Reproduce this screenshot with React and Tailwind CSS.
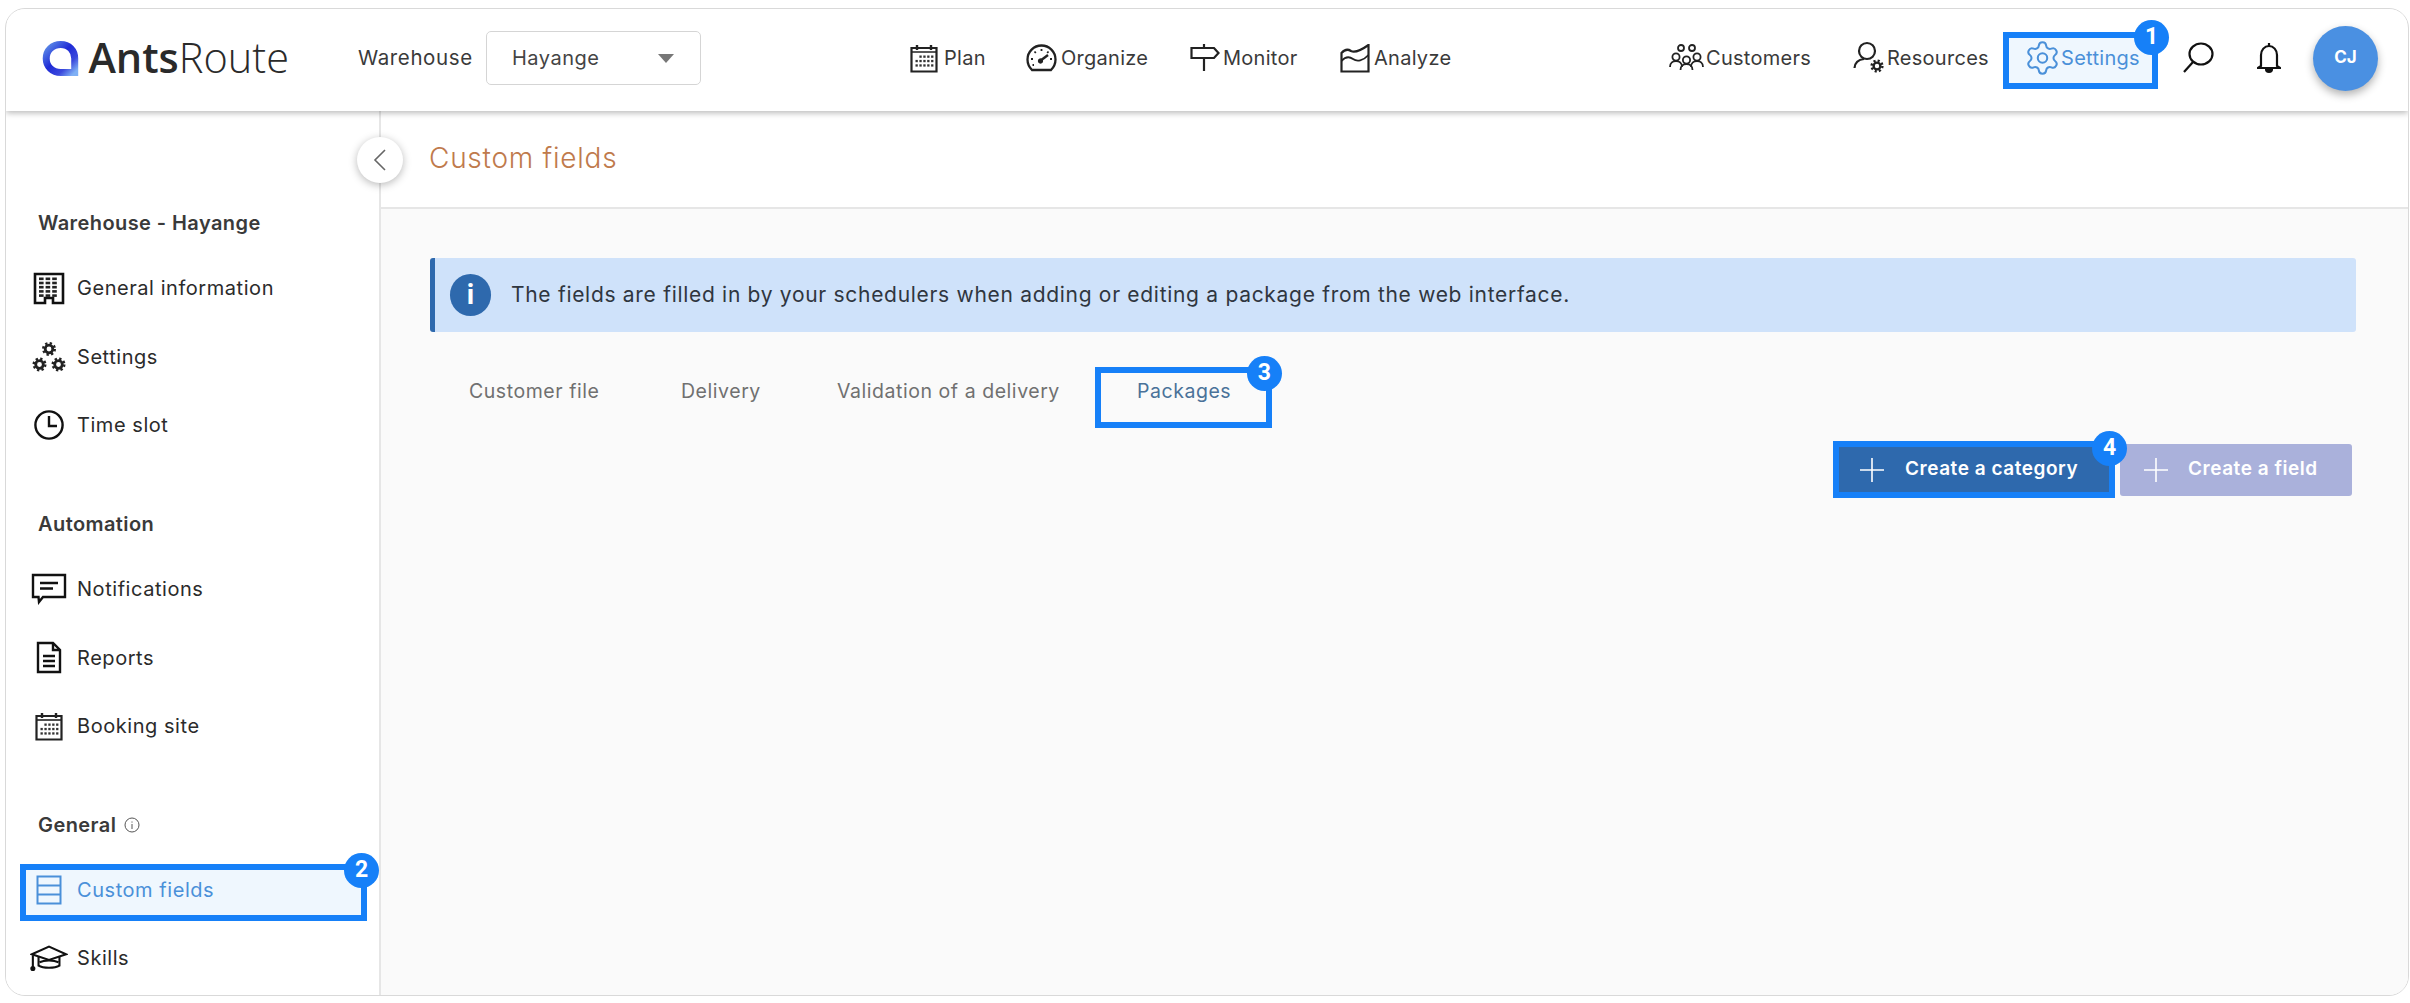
import React from "react";

const Ink = "#222";

function Gear({ cx, cy, r, color = Ink, sw = 2.4 }) {
  const t = 2 * Math.PI * (r + 2) / 16;
  return (
    <g fill="none" stroke={color}>
      <circle cx={cx} cy={cy} r={r} strokeWidth={sw} />
      <circle cx={cx} cy={cy} r={r + 2} strokeWidth={2.4} strokeDasharray={`${t} ${t}`} />
    </g>
  );
}

function Logo() {
  return (
    <svg width="40" height="39" viewBox="0 0 40 39" fill="none">
      <defs>
        <linearGradient id="lg" x1="0" y1="0" x2="1" y2="1">
          <stop offset="0" stopColor="#5f8fe8" />
          <stop offset="0.45" stopColor="#1f2bd6" />
          <stop offset="0.75" stopColor="#3a48dc" />
          <stop offset="1" stopColor="#7fb0f5" />
        </linearGradient>
      </defs>
      <path d="M20 4.5C11 4.5 4.5 11 4.5 19.5S11 34.5 20 34.5H35V19.5C35 11 29 4.5 20 4.5Z" stroke="url(#lg)" strokeWidth="7.5" />
    </svg>
  );
}

function IconBuilding() {
  const cells = [];
  for (let r = 0; r < 5; r++) for (let c = 0; c < 3; c++) cells.push(<rect key={`${r}${c}`} x={6 + c * 6.6} y={5.5 + r * 4.2} width="4.6" height="2.6" fill={Ink} />);
  return (
    <svg width="32" height="33" viewBox="0 0 32 33" fill="none">
      <path d="M2 2H30V31H20V26H12V31H2Z" stroke="#111" strokeWidth="2.6" />
      {cells}
    </svg>
  );
}
function IconGears() {
  return (
    <svg width="34" height="34" viewBox="0 0 34 34">
      <Gear cx={17} cy={9} r={3.8} sw={2.8} />
      <Gear cx={7.5} cy={24.5} r={3.8} sw={2.8} />
      <Gear cx={26.5} cy={24.5} r={3.8} sw={2.8} />
    </svg>
  );
}
function IconClock() {
  return (
    <svg width="32" height="32" viewBox="0 0 32 32" fill="none" stroke="#111" strokeWidth="2.4">
      <circle cx="16" cy="16" r="13.6" />
      <path d="M16 7V17H24" />
    </svg>
  );
}
function IconChat() {
  return (
    <svg width="36" height="32" viewBox="0 0 36 32" fill="none" stroke="#111" strokeWidth="2.4">
      <path d="M2 2H34V24H12L8 29L7.5 24H2Z" />
      <path d="M9 10H27M9 15.5H22" />
    </svg>
  );
}
function IconDoc() {
  return (
    <svg width="26" height="33" viewBox="0 0 26 33" fill="none" stroke="#111" strokeWidth="2.4">
      <path d="M2 2H17L24 9V31H2Z" />
      <path d="M17 2V9H24M7 15H19M7 20H19M7 25H19" />
    </svg>
  );
}
function Calendar({ w = 28, h = 29 }) {
  const dots = [];
  for (let r = 0; r < 3; r++) for (let c = 0; c < 5; c++) if (!(r === 0 && c === 0)) dots.push(<rect key={`${r}${c}`} x={5.5 + c * 3.9} y={11.5 + r * 4.4} width="2.3" height="2.3" fill="#333" />);
  return (
    <svg width={w} height={h} viewBox="0 0 28 29" fill="none">
      <path d="M1.5 4H26.5V27.5H1.5Z" stroke="#222" strokeWidth="2.2" />
      <path d="M1.5 8H26.5" stroke="#222" strokeWidth="1.6" />
      <path d="M7 1V6M21 1V6" stroke="#222" strokeWidth="2.4" />
      {dots}
    </svg>
  );
}
function IconTable() {
  return (
    <svg width="26" height="30" viewBox="0 0 26 30" fill="none" stroke="#4a90d9" strokeWidth="2">
      <rect x="1.5" y="1.5" width="23" height="27" />
      <path d="M1.5 10.5H24.5M1.5 19.5H24.5" />
    </svg>
  );
}
function IconCap() {
  return (
    <svg width="40" height="28" viewBox="0 0 40 28" fill="none" stroke="#111" strokeWidth="2.2">
      <path d="M2 10L20 2L38 10L20 16Z" />
      <path d="M9 13V22C14 25 26 25 31 22V13" />
      <path d="M10 18.5C15 16 25 16 30 18.5" />
      <path d="M3 11V25" />
      <circle cx="3" cy="25" r="1.6" fill="#111" />
    </svg>
  );
}
function IconGauge() {
  return (
    <svg width="31" height="28" viewBox="0 0 31 28" fill="none" stroke="#222">
      <path d="M6 26H25C28 23 29.5 19.5 29.5 15.5A14 14 0 0 0 1.5 15.5C1.5 19.5 3 23 6 26Z" strokeWidth="2.3" />
      <path d="M15.5 5V7M8.5 7.5L9.8 9M5 15H7M26 15H24M22.5 7.5L21.2 9M6.5 21H8" strokeWidth="1.8" />
      <path d="M14 17L22 11" strokeWidth="2.4" />
      <circle cx="14.5" cy="17" r="2.2" fill="#222" />
    </svg>
  );
}
function IconSign() {
  return (
    <svg width="30" height="28" viewBox="0 0 30 28" fill="none" stroke="#222" strokeWidth="2.2">
      <path d="M14 0V3M14 15V27" />
      <path d="M1.5 4H24L28.5 9L24 14H1.5Z" />
    </svg>
  );
}
function IconChart() {
  return (
    <svg width="30" height="29" viewBox="0 0 30 29" fill="none" stroke="#222" strokeWidth="2.2">
      <path d="M1.5 9C5 5 8 5 11 7C15 9 20 7 28.5 1V27.5H1.5Z" />
      <path d="M1.5 17C5 13 9 12 13 15C17 18 23 17 28.5 11" strokeWidth="1.8" />
    </svg>
  );
}
function Person({ x, y }) {
  const d = `M${x - 6} ${y + 10}C${x - 6} ${y + 6} ${x - 3} ${y + 4} ${x} ${y + 4}C${x + 3} ${y + 4} ${x + 6} ${y + 6} ${x + 6} ${y + 10}`;
  return (
    <g>
      <circle cx={x} cy={y} r="3.6" />
      <path d={d} />
    </g>
  );
}
function IconPeople() {
  return (
    <svg width="35" height="28" viewBox="0 0 35 28" fill="none" stroke="#222" strokeWidth="1.8">
      <circle cx="12" cy="4" r="3" />
      <circle cx="23" cy="4" r="3" />
      <Person x={7} y={13} />
      <Person x={28} y={13} />
      <Person x={17.5} y={16} />
    </svg>
  );
}
function IconPersonGear() {
  return (
    <svg width="34" height="34" viewBox="0 0 34 34" fill="none" stroke="#222">
      <circle cx="14" cy="10" r="8" strokeWidth="2.2" />
      <path d="M1.5 27C2 21 6 18.5 11 18" strokeWidth="2.2" />
      <Gear cx={24} cy={25} r={3.4} sw={2.4} />
    </svg>
  );
}
function IconSettings() {
  return (
    <svg width="31" height="34" viewBox="2.5 1.2 19 21.6" fill="none" stroke="#4a90d9" strokeWidth="1.3" strokeLinejoin="round">
      <path d="M9.671 4.136a2.34 2.34 0 0 1 4.659 0 2.34 2.34 0 0 0 3.319 1.915 2.34 2.34 0 0 1 2.33 4.033 2.34 2.34 0 0 0 0 3.831 2.34 2.34 0 0 1-2.33 4.033 2.34 2.34 0 0 0-3.319 1.915 2.34 2.34 0 0 1-4.659 0 2.34 2.34 0 0 0-3.32-1.915 2.34 2.34 0 0 1-2.33-4.033 2.34 2.34 0 0 0 0-3.831A2.34 2.34 0 0 1 6.35 6.051a2.34 2.34 0 0 0 3.319-1.915" />
      <circle cx="12" cy="12" r="3" />
    </svg>
  );
}
function IconSearch() {
  return (
    <svg width="32" height="32" viewBox="0 0 32 32" fill="none" stroke="#111" strokeWidth="2.2">
      <ellipse cx="19" cy="12" rx="11.5" ry="10.5" />
      <path d="M11 20L2 30" />
    </svg>
  );
}
function IconBell() {
  return (
    <svg width="24" height="32" viewBox="0 0 24 32" fill="none" stroke="#111" strokeWidth="2.2">
      <path d="M12 1V4" />
      <path d="M4 24V13C4 8 7.5 4 12 4C16.5 4 20 8 20 13V24L23 26H1Z" />
      <path d="M9 27C9 31 15 31 15 27" fill="#111" />
    </svg>
  );
}
function Plus() {
  return (
    <svg width="26" height="26" viewBox="0 0 26 26" stroke="#fff" strokeWidth="1.6">
      <path d="M13 1V25M1 13H25" />
    </svg>
  );
}
function Badge({ n, className }) {
  return (
    <span className={`absolute z-20 flex h-[35px] w-[35px] items-center justify-center rounded-full bg-[#1680f8] text-[23px] font-bold text-white [font-family:Roboto,sans-serif] ${className}`}>
      {n}
    </span>
  );
}

function NavItem({ icon, label, width, gap = "ml-[6px]", className = "" }) {
  return (
    <div className={`flex shrink-0 items-center ${className}`} style={{ width }}>
      {icon}
      <span className={`${gap} whitespace-nowrap text-[20px] tracking-[0.27px] text-[#3a3a3a]`}>{label}</span>
    </div>
  );
}

function SideHead({ children, className = "" }) {
  return <div className={`flex h-10 items-center pl-[32px] text-[20px] font-semibold tracking-[0.42px] text-[#3a3a3a] ${className}`}>{children}</div>;
}
function SideItem({ icon, label, className = "" }) {
  return (
    <div className={`flex h-[68.5px] items-center pl-[24px] ${className}`}>
      <span className="flex w-[38px] justify-center">{icon}</span>
      <span className="ml-[9px] text-[20px] tracking-[0.55px] text-[#2b2b2b]">{label}</span>
    </div>
  );
}

export default function App() {
  return (
    <div className="relative h-[1003px] w-[2410px] overflow-hidden bg-white pl-[5px] pt-[8px] [font-family:Inter,sans-serif]">
      <div className="flex h-[988px] w-[2404px] flex-col overflow-hidden rounded-[20px] border border-[#d9d9d9] bg-white">
        {/* Top bar */}
        <header className="relative z-10 flex h-[102px] shrink-0 items-center bg-white pb-[4px] shadow-[0_2px_6px_rgba(0,0,0,0.28)]">
          <div className="ml-[36px] flex w-[247px] shrink-0 items-center">
            <Logo />
            <span className="ml-[9px] text-[41.5px] leading-none text-[#2a2a2a] [font-family:'Open_Sans',sans-serif]">
              <span className="font-semibold">Ants</span>
              <span className="font-light">Route</span>
            </span>
          </div>
          <span className="ml-[69px] w-[120px] shrink-0 text-[20.5px] tracking-[0.6px] text-[#3a3a3a]">Warehouse</span>
          <div className="ml-[8px] flex h-[54px] w-[215px] shrink-0 items-center justify-between rounded-[5px] border border-[#d5d5d5] bg-white pl-[25px] pr-[26px]">
            <span className="text-[20px] tracking-[0.5px] text-[#444]">Hayange</span>
            <span className="h-0 w-0 border-x-[8px] border-t-[9px] border-x-transparent border-t-[#777]" />
          </div>
          <NavItem className="ml-[209px]" width={116} icon={<Calendar />} label="Plan" />
          <NavItem width={164} icon={<IconGauge />} label="Organize" gap="ml-[4px]" />
          <NavItem width={150} icon={<IconSign />} label="Monitor" gap="ml-[3px]" />
          <NavItem width={329} icon={<IconChart />} label="Analyze" gap="ml-[4px]" />
          <NavItem width={184} icon={<IconPeople />} label="Customers" gap="ml-[2px]" />
          <NavItem width={174} icon={<IconPersonGear />} label="Resources" gap="ml-0" />
          <div className="relative flex w-[155px] shrink-0 items-center">
            <span className="absolute -top-[9px] left-[-24px] h-[57px] w-[155px] border-[6px] border-[#1680f8] bg-[#eff7fe]" />
            <span className="relative z-10 flex items-center">
              <IconSettings />
              <span className="ml-[3px] text-[20px] tracking-[0.3px] text-[#4a90d9]">Settings</span>
            </span>
            <Badge n="1" className="-top-[21px] left-[107px]" />
          </div>
          <div className="w-[75px] shrink-0"><IconSearch /></div>
          <div className="w-[56px] shrink-0"><IconBell /></div>
          <div className="flex h-[65px] w-[65px] shrink-0 items-center justify-center rounded-full bg-[#4a90e2] text-[17px] font-bold text-white shadow-[0_4px_8px_rgba(0,0,0,0.3)]">CJ</div>
        </header>

        <div className="flex min-h-0 flex-1">
          {/* Sidebar */}
          <aside className="relative w-[375px] shrink-0 border-r-2 border-[#e6e6e6] bg-white pt-[92px]">
            <button className="absolute left-[351px] top-[26px] z-10 flex h-[46px] w-[46px] items-center justify-center rounded-full bg-white shadow-[0_2px_8px_rgba(0,0,0,0.28)]">
              <svg width="14" height="24" viewBox="0 0 14 24" fill="none" stroke="#666" strokeWidth="1.6"><path d="M12 2L2 12L12 22" /></svg>
            </button>
            <SideHead>Warehouse - Hayange</SideHead>
            <SideItem className="mt-[11px]" icon={<IconBuilding />} label="General information" />
            <SideItem icon={<IconGears />} label="Settings" />
            <SideItem icon={<IconClock />} label="Time slot" />
            <SideHead className="mt-[44.5px]">Automation</SideHead>
            <SideItem className="mt-[11px]" icon={<IconChat />} label="Notifications" />
            <SideItem icon={<IconDoc />} label="Reports" />
            <SideItem icon={<Calendar />} label="Booking site" />
            <SideHead className="mt-[44px]">
              General
              <svg className="ml-[8px]" width="16" height="16" viewBox="0 0 16 16" fill="none" stroke="#555" strokeWidth="1">
                <circle cx="8" cy="8" r="7" />
                <path d="M8 7V12M8 4.5V5.6" />
              </svg>
            </SideHead>
            <div className="relative mt-[11px] h-[68.5px]">
              <span className="absolute left-[14px] top-[8px] h-[57px] w-[347px] border-[6px] border-[#1680f8] bg-[#eff7fe]" />
              <div className="relative z-10 flex h-full items-center pl-[24px]">
                <span className="flex w-[38px] justify-center"><IconTable /></span>
                <span className="ml-[9px] text-[20px] tracking-[0.55px] text-[#4a90d9]">Custom fields</span>
              </div>
              <Badge n="2" className="left-[338px] -top-[3px]" />
            </div>
            <SideItem icon={<IconCap />} label="Skills" />
          </aside>

          {/* Main */}
          <main className="flex min-w-0 flex-1 flex-col bg-[#fafafa]">
            <div className="flex h-[98px] shrink-0 items-center border-b-2 border-[#e6e6e6] bg-white pb-[2px] pl-[48px]">
              <h1 className="text-[28px] font-light tracking-[0.75px] text-[#bf7a4c]">Custom fields</h1>
            </div>
            <div className="px-[49px] pt-[49px]">
              <div className="flex h-[74px] w-[1926px] items-center rounded-[3px] border-l-[5px] border-[#2e69ad] bg-[#cfe2fa] pl-[15px]">
                <span className="flex h-[42px] w-[41px] items-center justify-center rounded-full bg-[#2e69ad] text-[28px] font-bold leading-none text-white [font-family:Roboto,sans-serif]">i</span>
                <span className="ml-[20px] whitespace-nowrap text-[21px] tracking-[0.7px] text-[#2f3640]">
                  The fields are filled in by your schedulers when adding or editing a package from the web interface.
                </span>
              </div>
              <div className="mt-[35px] flex h-[61px] text-[19.5px] tracking-[0.55px] text-[#707070]">
                <div className="w-[212px] pl-[39px] pt-[10px]">Customer file</div>
                <div className="w-[156px] pl-[39px] pt-[10px]">Delivery</div>
                <div className="w-[297px] whitespace-nowrap pl-[39px] pt-[10px]">Validation of a delivery</div>
                <div className="relative w-[177px] border-[6px] border-[#1680f8] pl-[36px] pt-[4px] text-[#4a7299]">
                  Packages
                  <Badge n="3" className="-right-[16px] -top-[17px]" />
                </div>
              </div>
              <div className="mt-[13px] flex w-[1922px] items-center justify-end gap-[5px]">
                <div className="relative flex h-[57px] w-[282px] items-center border-[6px] border-[#1680f8] bg-[#2e69ad] pl-[20px] text-white">
                  <Plus />
                  <span className="ml-[20px] whitespace-nowrap text-[19px] font-semibold tracking-[0.53px]">Create a category</span>
                  <Badge n="4" className="-right-[18px] -top-[16px]" />
                </div>
                <div className="flex h-[52px] w-[232px] items-center rounded-[3px] bg-[#aab1db] pl-[23px] text-white">
                  <Plus />
                  <span className="ml-[19px] whitespace-nowrap text-[19px] font-semibold tracking-[0.53px]">Create a field</span>
                </div>
              </div>
            </div>
          </main>
        </div>
      </div>
    </div>
  );
}
